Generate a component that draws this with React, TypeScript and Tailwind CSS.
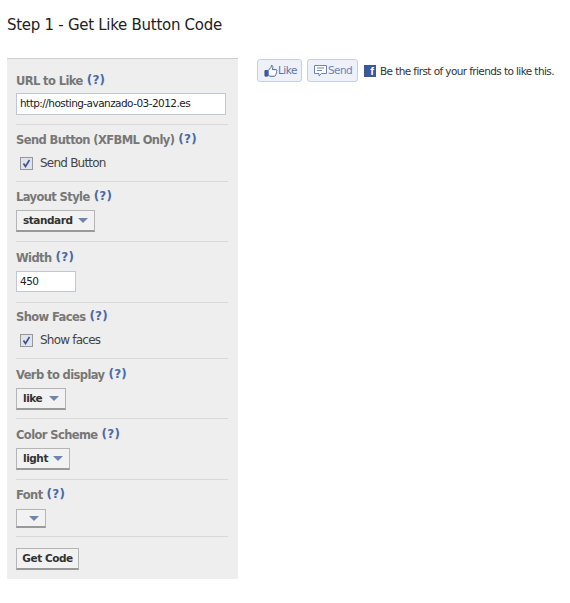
import React from "react";

function Label({ text }: { text: string }) {
  return (
    <div className="flex items-baseline gap-[4px] text-[11.5px] leading-[16px] font-bold text-[#777777] tracking-[-0.6px]">
      <span>{text}</span>
      <span className="text-[#4a69a8] relative top-[-1px] tracking-[0.2px] text-[12px]">(?)</span>
    </div>
  );
}

function Check({ text }: { text: string }) {
  return (
    <div className="flex items-center gap-[7px] pl-[4px] mt-[7px] text-[12px] leading-[16px] text-[#444] tracking-[-0.78px]">
      <span className="w-[13px] h-[13px] bg-[#dfe3ee] border border-[#979797] flex items-center justify-center">
        <svg width="9" height="9" viewBox="0 0 9 9">
          <path d="M1.5 4.5 L3.5 7.5 L7.5 1" fill="none" stroke="#3b4f8f" strokeWidth="1.6" />
        </svg>
      </span>
      <span>{text}</span>
    </div>
  );
}

function Select({ text, w, mt = "mt-[5px]" }: { text: string; w: string; mt?: string }) {
  return (
    <div
      className={`${mt} h-[22px] ${w} flex items-center justify-between pl-[6px] pr-[6px] bg-[#f2f2f2] border border-[#b5b5b5] border-b-2 border-b-[#9a9a9a] text-[10.5px] font-bold text-[#333] tracking-[-0.45px]`}
    >
      <span>{text}</span>
      <span className="w-0 h-0 border-l-[5px] border-r-[5px] border-t-[5px] border-l-transparent border-r-transparent border-t-[#6d84b4]" />
    </div>
  );
}

function Section({ h, children }: { h: string; children: React.ReactNode }) {
  return <div className={`${h} border-b border-[#d8d8d8]`}>{children}</div>;
}

export default function App() {
  return (
    <div className="w-[570px] h-[603px] bg-white overflow-hidden font-['DejaVu_Sans',sans-serif]">
      <h1 className="pl-[7px] pt-[15px] h-[58px] text-[15px] leading-[20px] font-normal text-[#222] tracking-[-0.28px]">
        Step 1 - Get Like Button Code
      </h1>
      <div className="flex">
        <div className="ml-[7px] w-[231px] h-[521px] bg-[#eeeeee] border-t border-[#cfcfcf] px-[9px] flex flex-col">
          <div className="w-[212px]">
            <Section h="h-[66px] pt-[14px]">
              <Label text="URL to Like" />
              <div className="mt-[4px] h-[22px] w-[210px] bg-white border border-[#bdc7d8] px-[3px] flex items-center text-[10.5px] text-[#222] tracking-[-0.55px]">
                http://hosting-avanzado-03-2012.es
              </div>
            </Section>
            <Section h="h-[57px] pt-[7px]">
              <Label text="Send Button (XFBML Only)" />
              <Check text="Send Button" />
            </Section>
            <Section h="h-[60px] pt-[7px]">
              <Label text="Layout Style" />
              <Select text="standard" w="w-[79px]" />
            </Section>
            <Section h="h-[61px] pt-[8px]">
              <Label text="Width" />
              <div className="mt-[5px] h-[21px] w-[60px] bg-white border border-[#bdc7d8] px-[3px] flex items-center text-[10.5px] text-[#222] tracking-[-0.55px]">
                450
              </div>
            </Section>
            <Section h="h-[56px] pt-[6px]">
              <Label text="Show Faces" />
              <Check text="Show faces" />
            </Section>
            <Section h="h-[60px] pt-[8px]">
              <Label text="Verb to display" />
              <Select text="like" w="w-[50px]" />
            </Section>
            <Section h="h-[61px] pt-[8px]">
              <Label text="Color Scheme" />
              <Select text="light" w="w-[54px]" />
            </Section>
            <Section h="h-[57px] pt-[7px]">
              <Label text="Font" />
              <Select text="" w="w-[30px] !h-[19px]" mt="mt-[6px]" />
            </Section>
            <div className="pt-[11px]">
              <div className="h-[22px] w-[63px] flex items-center justify-center bg-[#f2f2f2] border border-[#b5b5b5] border-b-2 border-b-[#9a9a9a] text-[10.5px] font-bold text-[#333] tracking-[-0.45px]">
                Get Code
              </div>
            </div>
          </div>
        </div>
        <div className="ml-[19px] mt-[1px] flex items-start h-[23px] text-[10.5px]">
          <div className="w-[45px] h-[23px] flex items-center pl-[6px] gap-[0px] bg-[#eef1f7] border border-[#c6d0e4] rounded-[3px] text-[#5b74a8] tracking-[-0.5px]">
            <svg width="14" height="14" viewBox="0 0 15 14">
              <path d="M1 6.5h3v6H1z" fill="#3b5998" stroke="#3b5998" />
              <path d="M4.5 6.5 L7.5 3 L8 1 C9.5 1 10 2.5 9 5.5 H13 C14.2 5.5 14 7 13.3 7.3 C14 8 13.7 9 13 9.3 C13.4 10.2 12.8 11 12.2 11.2 C12.4 12 12 12.6 11 12.6 H6.5 L4.5 11.5 Z" fill="#fff" stroke="#3b5998" />
            </svg>
            <span>Like</span>
          </div>
          <div className="ml-[5px] w-[51px] h-[23px] flex items-center pl-[6px] gap-[1px] bg-[#eef1f7] border border-[#c6d0e4] rounded-[3px] text-[#6d84b4] tracking-[-0.6px]">
            <svg width="13" height="13" viewBox="0 0 13 13">
              <path d="M0.5 1.5h12v8h-5l-2.5 2.5v-2.5h-4.5z" fill="#fff" stroke="#6d84b4" />
              <path d="M3 4h7M3 6.5h5" stroke="#6d84b4" />
            </svg>
            <span>Send</span>
          </div>
          <div className="ml-[6px] h-[23px] flex items-center">
            <span className="w-[12px] h-[12px] bg-[#3b5998] flex justify-end pr-[2px] text-white font-bold text-[11px] leading-[13px] font-['Liberation_Sans',sans-serif]">
              f
            </span>
            <span className="ml-[4px] mt-[2px] text-[10.5px] text-[#333] whitespace-nowrap tracking-[-0.6px]">
              Be the first of your friends to like this.
            </span>
          </div>
        </div>
      </div>
    </div>
  );
}
